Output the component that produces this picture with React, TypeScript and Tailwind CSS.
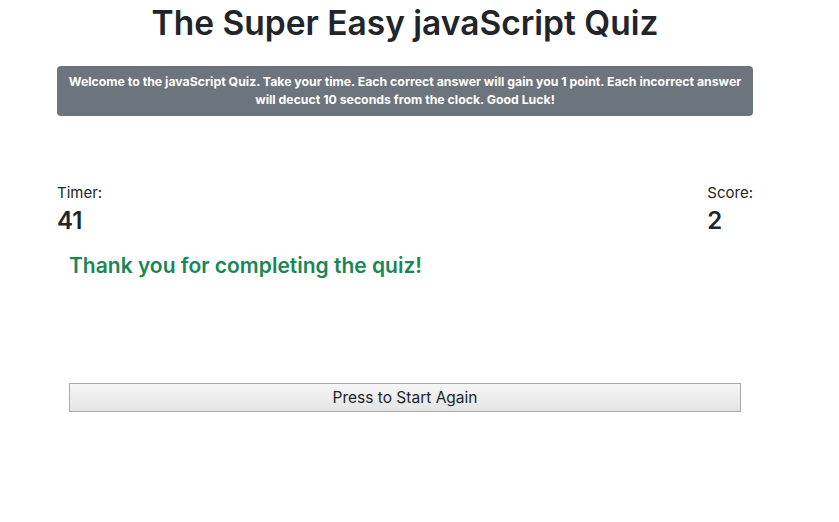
export default function App() {
  return (
    <div className="w-[810px] bg-white text-[#212529]" style={{ fontFamily: "Inter, 'Noto Sans', sans-serif" }}>
      <div className="mx-auto w-[696px]">
        <h1 className="pt-[1px] text-center text-[33.5px] font-semibold leading-[44px]">
          The Super Easy javaScript Quiz
        </h1>
        <div className="mt-[21px] rounded-[4px] bg-[#6c757d] px-2 py-[7px] text-center text-[12.3px] font-bold leading-[18px] text-white">
          Welcome to the javaScript Quiz. Take your time. Each correct answer will gain you 1 point. Each incorrect answer
          <br />
          will decuct 10 seconds from the clock. Good Luck!
        </div>
        <div className="mt-[67px] flex justify-between">
          <div>
            <div className="text-[15px] leading-[20px]">Timer:</div>
            <div className="mt-[4px] text-[24px] font-semibold leading-[28px]">41</div>
          </div>
          <div className="text-left">
            <div className="text-[15px] leading-[20px]">Score:</div>
            <div className="mt-[4px] text-[24px] font-semibold leading-[28px]">2</div>
          </div>
        </div>
        <div className="mt-[17px] pl-[12px] text-[21px] font-semibold leading-[28px] text-[#198754]">
          Thank you for completing the quiz!
        </div>
        <div className="mt-[103px] pl-[12px]">
          <button className="h-[29px] w-[672px] border border-[#a9a9a9] bg-gradient-to-b from-[#f6f6f6] to-[#e4e4e4] text-[15.5px] text-[#212529]">
            Press to Start Again
          </button>
        </div>
        <div className="h-[100px]" />
      </div>
    </div>
  );
}
